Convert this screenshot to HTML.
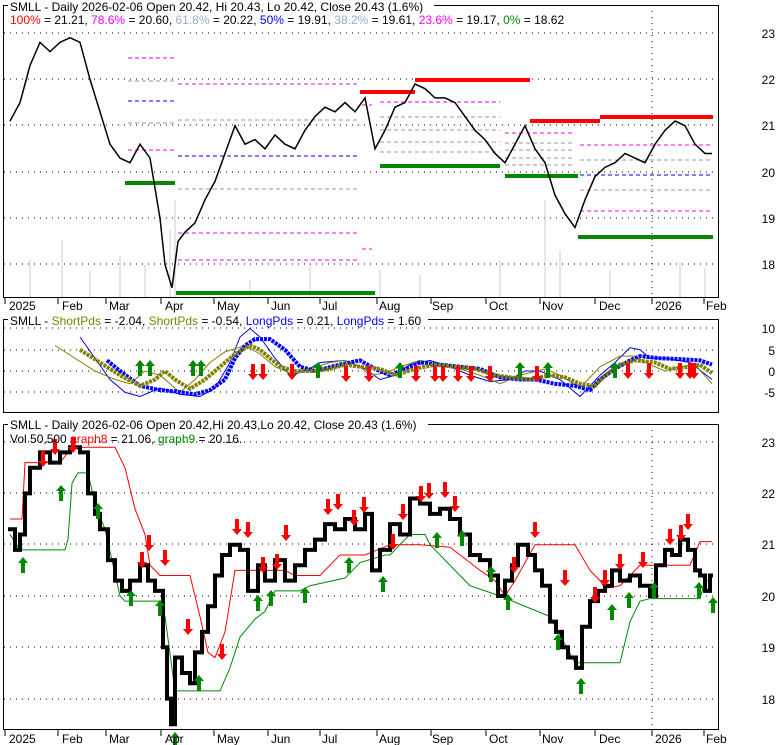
<!DOCTYPE html><html><head><meta charset="utf-8"><style>
body{margin:0;background:#fff;width:780px;height:745px;overflow:hidden}
svg{display:block;font-family:"Liberation Sans",sans-serif}
</style></head><body>
<svg width="780" height="745" viewBox="0 0 780 745">
<defs>
<polygon id="up" points="0,-8 5,-2 2,-2 2,8 -2,8 -2,-2 -5,-2" fill="#008800"/>
<polygon id="dn" points="0,8 5,2 2,2 2,-8 -2,-8 -2,2 -5,2" fill="#ff0000"/>
</defs>
<rect width="780" height="745" fill="#fff"/>
<g stroke="#000" stroke-width="1" stroke-dasharray="1,5">
<line x1="4" x2="719" y1="33" y2="33"/><line x1="4" x2="719" y1="79" y2="79"/><line x1="4" x2="719" y1="125" y2="125"/><line x1="4" x2="719" y1="172" y2="172"/><line x1="4" x2="719" y1="218" y2="218"/><line x1="4" x2="719" y1="264" y2="264"/>
<line x1="4" x2="719" y1="328" y2="328"/><line x1="4" x2="719" y1="350" y2="350"/><line x1="4" x2="719" y1="371" y2="371"/><line x1="4" x2="719" y1="392" y2="392"/>
<line x1="4" x2="719" y1="442" y2="442"/><line x1="4" x2="719" y1="493" y2="493"/><line x1="4" x2="719" y1="544" y2="544"/><line x1="4" x2="719" y1="596" y2="596"/><line x1="4" x2="719" y1="647" y2="647"/><line x1="4" x2="719" y1="699" y2="699"/>
<line x1="652" x2="652" y1="5" y2="298"/><line x1="652" x2="652" y1="424" y2="730"/>
</g>
<g stroke="#ccc" stroke-width="1">
<line x1="30" x2="30" y1="298" y2="260"/><line x1="62" x2="62" y1="298" y2="240"/><line x1="90" x2="90" y1="298" y2="270"/><line x1="120" x2="120" y1="298" y2="255"/><line x1="145" x2="145" y1="298" y2="265"/><line x1="170" x2="170" y1="298" y2="230"/><line x1="175" x2="175" y1="298" y2="200"/><line x1="250" x2="250" y1="298" y2="280"/><line x1="310" x2="310" y1="298" y2="265"/><line x1="380" x2="380" y1="298" y2="270"/><line x1="420" x2="420" y1="298" y2="275"/><line x1="500" x2="500" y1="298" y2="260"/><line x1="545" x2="545" y1="298" y2="200"/><line x1="560" x2="560" y1="298" y2="250"/><line x1="610" x2="610" y1="298" y2="270"/><line x1="680" x2="680" y1="298" y2="262"/><line x1="705" x2="705" y1="298" y2="268"/>
</g>
<g stroke-dasharray="4,3" stroke-width="1">
<line x1="128" x2="175" y1="58" y2="58" stroke="#f0f"/><line x1="128" x2="175" y1="81" y2="81" stroke="#999"/><line x1="128" x2="175" y1="101" y2="101" stroke="#00f"/><line x1="128" x2="175" y1="123" y2="123" stroke="#999"/><line x1="128" x2="175" y1="150" y2="150" stroke="#f0f"/>
<line x1="178" x2="358" y1="84" y2="84" stroke="#f0f"/><line x1="178" x2="358" y1="120" y2="120" stroke="#999"/><line x1="178" x2="358" y1="156" y2="156" stroke="#00f"/><line x1="178" x2="358" y1="189" y2="189" stroke="#999"/><line x1="178" x2="358" y1="233" y2="233" stroke="#f0f"/><line x1="178" x2="358" y1="260" y2="260" stroke="#f0f"/>
<line x1="362" x2="372" y1="105" y2="105" stroke="#f0f"/><line x1="362" x2="372" y1="249" y2="249" stroke="#f0f"/>
<line x1="380" x2="500" y1="102" y2="102" stroke="#f0f"/><line x1="380" x2="500" y1="117" y2="117" stroke="#999"/><line x1="380" x2="500" y1="130" y2="130" stroke="#999"/><line x1="380" x2="500" y1="142" y2="142" stroke="#999"/><line x1="380" x2="500" y1="152" y2="152" stroke="#999"/>
<line x1="505" x2="575" y1="133" y2="133" stroke="#f0f"/><line x1="505" x2="575" y1="143" y2="143" stroke="#999"/><line x1="505" x2="575" y1="150" y2="150" stroke="#999"/><line x1="505" x2="575" y1="158" y2="158" stroke="#999"/><line x1="505" x2="575" y1="165" y2="165" stroke="#999"/>
<line x1="580" x2="712" y1="145" y2="145" stroke="#f0f"/><line x1="580" x2="712" y1="160" y2="160" stroke="#999"/><line x1="580" x2="712" y1="175" y2="175" stroke="#00f"/><line x1="580" x2="712" y1="190" y2="190" stroke="#999"/><line x1="580" x2="712" y1="211" y2="211" stroke="#f0f"/>
</g>
<g stroke-width="4">
<line x1="360" x2="415" y1="92" y2="92" stroke="#f00"/><line x1="415" x2="530" y1="80" y2="80" stroke="#f00"/><line x1="530" x2="600" y1="121" y2="121" stroke="#f00"/><line x1="600" x2="713" y1="117" y2="117" stroke="#f00"/>
<line x1="125" x2="175" y1="183" y2="183" stroke="#080"/><line x1="176" x2="375" y1="293" y2="293" stroke="#080"/><line x1="380" x2="500" y1="166" y2="166" stroke="#080"/><line x1="505" x2="578" y1="176" y2="176" stroke="#080"/><line x1="578" x2="713" y1="237" y2="237" stroke="#080"/>
</g>
<g transform="translate(0,172) scale(1,-46.3) translate(0,-20)">
<polyline fill="none" stroke="#000" stroke-width="1.5" vector-effect="non-scaling-stroke" points="10,21.1 20,21.5 30,22.3 40,22.8 50,22.6 60,22.8 70,22.9 80,22.8 90,22.0 100,21.3 110,20.6 120,20.3 130,20.2 140,20.6 150,20.3 160,19.0 165,18.0 172,17.5 178,18.5 185,18.7 195,18.9 205,19.4 215,19.8 225,20.4 235,21.0 245,20.6 255,20.7 265,20.5 275,20.8 285,20.6 295,20.5 305,20.9 315,21.2 325,21.4 335,21.3 345,21.5 355,21.3 365,21.6 375,20.5 385,20.9 395,21.4 405,21.5 415,21.9 425,21.8 435,21.6 445,21.6 455,21.5 465,21.2 475,20.9 485,20.7 495,20.4 505,20.2 515,20.6 525,21.0 535,20.5 545,20.2 555,19.5 565,19.1 575,18.8 585,19.4 595,19.9 605,20.1 615,20.2 625,20.4 635,20.3 645,20.2 655,20.6 665,20.9 675,21.1 685,21.0 695,20.6 705,20.4 712,20.4"/>
</g>
<g transform="translate(0,371) scale(1,-4.25)" fill="none">
<polyline stroke="#00f" stroke-width="1" vector-effect="non-scaling-stroke" points="80,8 95,3 110,-2 125,-5 140,-6 160,-4 180,-5.5 200,-6 215,-4 230,2 240,8 250,10 260,8 275,3 290,-1 305,0 320,2 345,2.5 365,0.5 380,-2 395,-1 410,1.5 430,2.5 450,1 470,-1 490,-2.5 510,-2 525,0 540,0 560,-2 580,-6 600,-1 615,2 630,5.5 640,5 650,3 665,3 690,2 712,-2"/>
<polyline stroke="#808000" stroke-width="1" vector-effect="non-scaling-stroke" points="55,6 75,3 95,0 115,-2 130,-3 145,0 160,-1 180,-5 195,-2 210,2 225,4.5 245,6 260,4 275,1 290,-0.5 310,0.5 330,2 345,2.5 360,1 370,-1 385,-0.5 400,1 420,2.5 440,1.5 460,0.5 480,-1 500,-3 520,-1 545,0.5 560,-1 580,-4 600,1 620,3.5 635,3.5 650,1.5 665,0 680,1 695,1.5 712,-3"/>
<polyline stroke="#00f" stroke-width="4" stroke-dasharray="3,1" vector-effect="non-scaling-stroke" points="107,2.5 120,0 140,-3.5 160,-4.5 175,-4.8 195,-5.5 210,-4.5 225,-2 235,3 245,6 255,7.5 270,7.5 285,5 300,1 315,0 340,1.5 360,2.5 375,0.5 390,-1 405,0.5 420,2 440,1.5 460,1 480,0.5 500,-1.5 520,-2 535,-2 555,-3 575,-3.5 590,-4.5 600,-2 615,0.5 630,2.5 640,3.5 660,3 680,2.8 700,2.5 712,1.5"/>
<polyline stroke="#808000" stroke-width="4" stroke-dasharray="3,1" vector-effect="non-scaling-stroke" points="80,5 100,2 120,-1 140,-3.5 155,-2 165,0 175,-2 190,-4.2 205,-2 220,1 235,4 250,6 260,5 270,3 280,1 295,0 315,0 330,0.5 345,1.5 360,1 380,0.5 395,-1 415,0.5 435,1.5 455,1 475,0.5 495,-1 510,-1.5 530,-2 550,-1 565,-1.5 580,-3 595,-3.5 605,-1 620,1.5 635,2.5 655,2 670,0.5 690,1 700,1.5 712,-0.5"/>
</g>
<g>
<use href="#up" x="140" y="368"/><use href="#up" x="150" y="368"/><use href="#up" x="193" y="368"/><use href="#up" x="201" y="368"/><use href="#up" x="318" y="370"/><use href="#up" x="400" y="370"/><use href="#up" x="520" y="370"/><use href="#up" x="548" y="370"/><use href="#up" x="615" y="370"/>
<use href="#dn" x="253" y="372"/><use href="#dn" x="263" y="372"/><use href="#dn" x="292" y="372"/><use href="#dn" x="346" y="374"/><use href="#dn" x="369" y="374"/><use href="#dn" x="416" y="374"/><use href="#dn" x="435" y="374"/><use href="#dn" x="443" y="374"/><use href="#dn" x="458" y="374"/><use href="#dn" x="471" y="374"/><use href="#dn" x="490" y="374"/><use href="#dn" x="537" y="374"/><use href="#dn" x="628" y="371"/><use href="#dn" x="649" y="371"/><use href="#dn" x="680" y="371"/><use href="#dn" x="690" y="371"/><use href="#dn" x="694" y="371"/>
</g>
<g transform="translate(0,596) scale(1,-51.3) translate(0,-20)" fill="none">
<polyline stroke="#f00" stroke-width="1" vector-effect="non-scaling-stroke" points="10,21.5 22,21.5 25,22.6 60,22.6 72,22.9 115,22.9 125,22.5 135,21.7 145,21.2 150,20.6 160,20.4 190,20.4 200,19.6 208,18.9 215,18.8 225,19.3 235,20.5 285,20.5 295,20.4 320,20.4 340,20.8 365,20.8 390,21.0 420,21.0 450,20.95 480,20.5 495,20.3 505,20.0 515,20.3 535,21.0 575,21.0 590,20.5 600,20.3 605,20.15 620,20.2 640,20.6 690,20.6 700,21.06 712,21.06"/>
<polyline stroke="#080" stroke-width="1" vector-effect="non-scaling-stroke" points="10,21.2 20,20.9 65,20.9 68,21.1 72,22.2 78,22.4 88,22.4 95,21.8 105,21.3 120,20.0 125,19.9 160,19.9 165,19.6 175,18.15 220,18.15 230,18.6 240,19.2 255,19.55 265,19.7 275,20.1 300,20.1 310,20.2 345,20.35 360,20.65 385,20.8 390,20.8 410,21.2 425,21.2 430,21.0 440,20.8 455,20.5 470,20.2 500,20.0 550,19.6 575,18.7 620,18.7 630,19.5 640,19.9 650,19.95 700,19.95 705,20.3 712,20.3"/>
<polyline stroke="#000" stroke-width="4" stroke-linejoin="miter" vector-effect="non-scaling-stroke" points="8,21.3 15,21.3 15,20.9 20,20.9 20,21.2 25,21.2 25,22 30,22 30,22.5 40,22.5 40,22.8 50,22.8 50,22.6 60,22.6 60,22.8 70,22.8 70,22.9 80,22.9 80,22.8 88,22.8 88,22.0 95,22.0 95,21.6 100,21.6 100,21.3 108,21.3 108,20.7 115,20.7 115,20.3 122,20.3 122,20.1 130,20.1 130,20.3 140,20.3 140,20.6 148,20.6 148,20.3 155,20.3 155,20.1 163,20.1 163,19.0 167,19.0 167,18.0 171,18.0 171,17.5 175,17.5 175,18.8 182,18.8 182,18.5 190,18.5 190,18.3 195,18.3 195,18.9 202,18.9 202,19.3 208,19.3 208,19.8 215,19.8 215,20.4 222,20.4 222,20.8 230,20.8 230,21.0 240,21.0 240,20.9 248,20.9 248,20.1 258,20.1 258,20.6 265,20.6 265,20.3 275,20.3 275,20.7 285,20.7 285,20.3 295,20.3 295,20.6 305,20.6 305,20.9 315,20.9 315,21.1 325,21.1 325,21.4 335,21.4 335,21.3 345,21.3 345,21.5 355,21.5 355,21.3 365,21.3 365,21.6 372,21.6 372,20.5 380,20.5 380,20.9 390,20.9 390,21.4 400,21.4 400,21.2 410,21.2 410,21.9 420,21.9 420,21.8 430,21.8 430,21.6 440,21.6 440,21.7 450,21.7 450,21.5 460,21.5 460,21.2 470,21.2 470,20.8 480,20.8 480,20.7 490,20.7 490,20.4 498,20.4 498,20.0 505,20.0 505,20.3 512,20.3 512,20.6 518,20.6 518,21.0 528,21.0 528,20.8 535,20.8 535,20.5 542,20.5 542,20.2 550,20.2 550,19.5 556,19.5 556,19.3 562,19.3 562,19.0 568,19.0 568,18.8 576,18.8 576,18.6 582,18.6 582,19.4 590,19.4 590,19.9 598,19.9 598,20.1 605,20.1 605,20.2 612,20.2 612,20.5 620,20.5 620,20.3 630,20.3 630,20.4 640,20.4 640,20.2 650,20.2 650,20.0 656,20.0 656,20.6 665,20.6 665,20.9 672,20.9 672,20.8 680,20.8 680,21.1 688,21.1 688,20.9 695,20.9 695,20.5 700,20.5 700,20.4 705,20.4 705,20.1 710,20.1 710,20.4 713,20.4"/>
</g>
<g>
<use href="#dn" x="43" y="459"/><use href="#dn" x="55" y="447"/><use href="#dn" x="73" y="445"/><use href="#dn" x="149" y="543"/><use href="#dn" x="142" y="560"/><use href="#dn" x="165" y="558"/><use href="#dn" x="188" y="627"/><use href="#dn" x="222" y="652"/><use href="#dn" x="237" y="527"/><use href="#dn" x="248" y="530"/><use href="#dn" x="263" y="565"/><use href="#dn" x="277" y="562"/><use href="#dn" x="286" y="533"/><use href="#dn" x="328" y="507"/><use href="#dn" x="338" y="502"/><use href="#dn" x="354" y="518"/><use href="#dn" x="364" y="505"/><use href="#dn" x="403" y="512"/><use href="#dn" x="393" y="542"/><use href="#dn" x="421" y="494"/><use href="#dn" x="429" y="491"/><use href="#dn" x="445" y="490"/><use href="#dn" x="455" y="504"/><use href="#dn" x="535" y="530"/><use href="#dn" x="514" y="565"/><use href="#dn" x="565" y="578"/><use href="#dn" x="595" y="595"/><use href="#dn" x="605" y="578"/><use href="#dn" x="620" y="562"/><use href="#dn" x="643" y="560"/><use href="#dn" x="670" y="537"/><use href="#dn" x="681" y="533"/><use href="#dn" x="688" y="522"/>
<use href="#up" x="23" y="565"/><use href="#up" x="61" y="493"/><use href="#up" x="98" y="511"/><use href="#up" x="131" y="598"/><use href="#up" x="160" y="608"/><use href="#up" x="175" y="740"/><use href="#up" x="199" y="683"/><use href="#up" x="258" y="603"/><use href="#up" x="271" y="598"/><use href="#up" x="305" y="595"/><use href="#up" x="349" y="565"/><use href="#up" x="383" y="584"/><use href="#up" x="437" y="540"/><use href="#up" x="462" y="538"/><use href="#up" x="491" y="574"/><use href="#up" x="508" y="602"/><use href="#up" x="558" y="642"/><use href="#up" x="581" y="686"/><use href="#up" x="612" y="612"/><use href="#up" x="629" y="600"/><use href="#up" x="654" y="590"/><use href="#up" x="699" y="590"/><use href="#up" x="713" y="605"/>
</g>
<g fill="none" stroke="#000" stroke-width="1">
<rect x="3.5" y="5.5" width="715" height="292"/>
<rect x="3.5" y="319.5" width="715" height="93"/>
<rect x="3.5" y="424.5" width="715" height="305"/>
</g>
<rect x="8" y="0" width="426" height="12" fill="#fff"/>
<rect x="8" y="313" width="420" height="12" fill="#fff"/>
<rect x="8" y="418" width="420" height="12" fill="#fff"/>
<g font-size="12" fill="#000">
<text x="10" y="11">SMLL - Daily 2026-02-06 Open 20.42, Hi 20.43, Lo 20.42, Close 20.43 (1.6%)</text>
<text x="10" y="24"><tspan fill="#f00">100%</tspan> = 21.21, <tspan fill="#f0f">78.6%</tspan> = 20.60, <tspan fill="#99aacc">61.8%</tspan> = 20.22, <tspan fill="#00f">50%</tspan> = 19.91, <tspan fill="#99aacc">38.2%</tspan> = 19.61, <tspan fill="#f0f">23.6%</tspan> = 19.17, <tspan fill="#080">0%</tspan> = 18.62</text>
<text x="10" y="325">SMLL - <tspan fill="#808000">ShortPds</tspan> = -2.04, <tspan fill="#808000">ShortPds</tspan> = -0.54, <tspan fill="#00f">LongPds</tspan> = 0.21, <tspan fill="#00f">LongPds</tspan> = 1.60</text>
<text x="10" y="429">SMLL - Daily 2026-02-06 Open 20.42,Hi 20.43,Lo 20.42, Close 20.43 (1.6%)</text>
<text x="10" y="443">Vol 50,500 <tspan fill="#f00">graph8</tspan> = 21.06, <tspan fill="#080">graph9</tspan> = 20.16.</text>
</g>
<g font-size="12" fill="#000" text-anchor="end">
<text x="775" y="38">23</text><text x="775" y="84">22</text><text x="775" y="130">21</text><text x="775" y="177">20</text><text x="775" y="223">19</text><text x="775" y="269">18</text>
<text x="775" y="333">10</text><text x="775" y="355">5</text><text x="775" y="376">0</text><text x="775" y="397">-5</text>
<text x="775" y="447">23</text><text x="775" y="498">22</text><text x="775" y="549">21</text><text x="775" y="601">20</text><text x="775" y="652">19</text><text x="775" y="704">18</text>
</g>
<g font-size="12" fill="#000">
<text x="9" y="310">2025</text><text x="62" y="310">Feb</text><text x="109" y="310">Mar</text><text x="165" y="310">Apr</text><text x="217" y="310">May</text><text x="271" y="310">Jun</text><text x="322" y="310">Jul</text><text x="379" y="310">Aug</text><text x="432" y="310">Sep</text><text x="489" y="310">Oct</text><text x="542" y="310">Nov</text><text x="599" y="310">Dec</text><text x="655" y="310">2026</text><text x="706" y="310">Feb</text>
<text x="9" y="743">2025</text><text x="62" y="743">Feb</text><text x="109" y="743">Mar</text><text x="165" y="743">Apr</text><text x="217" y="743">May</text><text x="271" y="743">Jun</text><text x="322" y="743">Jul</text><text x="379" y="743">Aug</text><text x="432" y="743">Sep</text><text x="489" y="743">Oct</text><text x="542" y="743">Nov</text><text x="599" y="743">Dec</text><text x="655" y="743">2026</text><text x="706" y="743">Feb</text>
</g>
<g stroke="#000">
<line x1="5" x2="5" y1="298" y2="304"/><line x1="58" x2="58" y1="298" y2="304"/><line x1="106" x2="106" y1="298" y2="304"/><line x1="161" x2="161" y1="298" y2="304"/><line x1="214" x2="214" y1="298" y2="304"/><line x1="268" x2="268" y1="298" y2="304"/><line x1="320" x2="320" y1="298" y2="304"/><line x1="377" x2="377" y1="298" y2="304"/><line x1="431" x2="431" y1="298" y2="304"/><line x1="486" x2="486" y1="298" y2="304"/><line x1="540" x2="540" y1="298" y2="304"/><line x1="595" x2="595" y1="298" y2="304"/><line x1="652" x2="652" y1="298" y2="304"/><line x1="704" x2="704" y1="298" y2="304"/>
<line x1="5" x2="5" y1="730" y2="736"/><line x1="58" x2="58" y1="730" y2="736"/><line x1="106" x2="106" y1="730" y2="736"/><line x1="161" x2="161" y1="730" y2="736"/><line x1="214" x2="214" y1="730" y2="736"/><line x1="268" x2="268" y1="730" y2="736"/><line x1="320" x2="320" y1="730" y2="736"/><line x1="377" x2="377" y1="730" y2="736"/><line x1="431" x2="431" y1="730" y2="736"/><line x1="486" x2="486" y1="730" y2="736"/><line x1="540" x2="540" y1="730" y2="736"/><line x1="595" x2="595" y1="730" y2="736"/><line x1="652" x2="652" y1="730" y2="736"/><line x1="704" x2="704" y1="730" y2="736"/>
</g>
</svg>
</body></html>
